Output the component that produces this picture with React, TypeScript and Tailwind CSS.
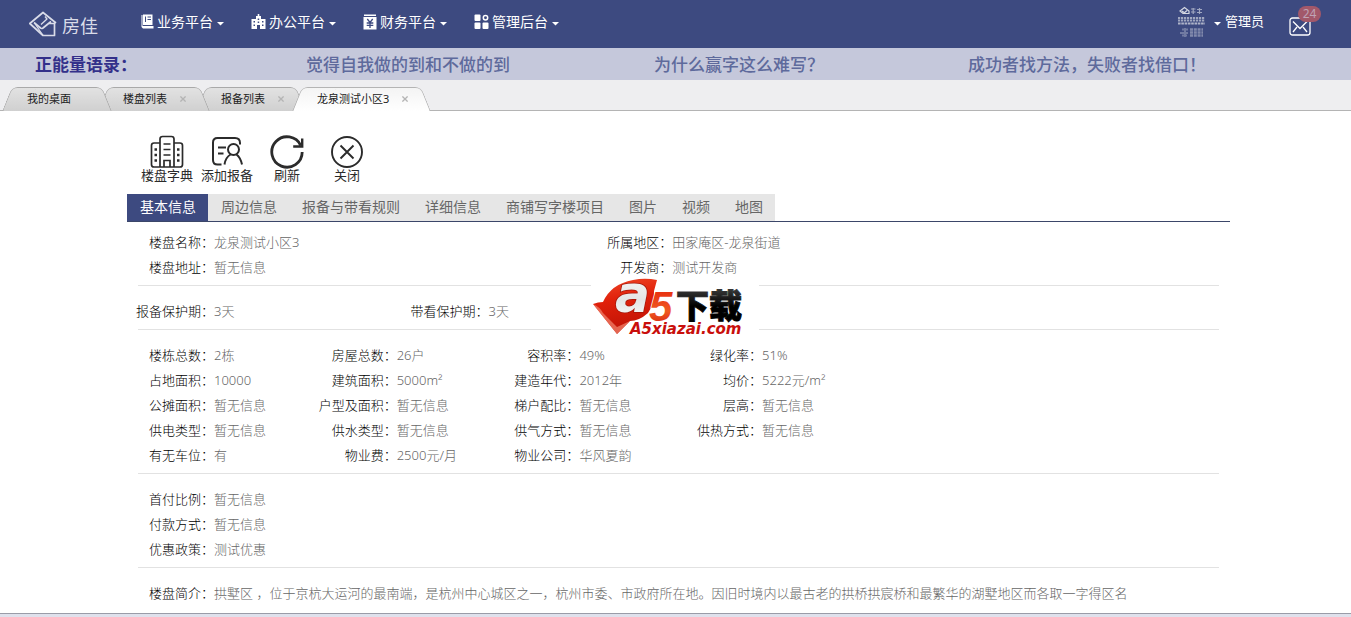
import React from "react";
import clsx from "clsx";

type Field = [label: string, value: string];

const NONE = "暂无信息";

const quotes = ["觉得自我做的到和不做的到", "为什么赢字这么难写？", "成功者找方法，失败者找借口！"];

const infoTabs = ["基本信息", "周边信息", "报备与带看规则", "详细信息", "商铺写字楼项目", "图片", "视频", "地图"];

const location: Field[] = [
  ["楼盘名称", "龙泉测试小区3"],
  ["所属地区", "田家庵区-龙泉街道"],
  ["楼盘地址", NONE],
  ["开发商", "测试开发商"],
];

const protection: Field[] = [
  ["报备保护期", "3天"],
  ["带看保护期", "3天"],
];

const building: Field[] = [
  ["楼栋总数", "2栋"],
  ["房屋总数", "26户"],
  ["容积率", "49%"],
  ["绿化率", "51%"],
  ["占地面积", "10000"],
  ["建筑面积", "5000m²"],
  ["建造年代", "2012年"],
  ["均价", "5222元/m²"],
  ["公摊面积", NONE],
  ["户型及面积", NONE],
  ["梯户配比", NONE],
  ["层高", NONE],
  ["供电类型", NONE],
  ["供水类型", NONE],
  ["供气方式", NONE],
  ["供热方式", NONE],
  ["有无车位", "有"],
  ["物业费", "2500元/月"],
  ["物业公司", "华风夏韵"],
];

const payment: Field[] = [
  ["首付比例", NONE],
  ["付款方式", NONE],
  ["优惠政策", "测试优惠"],
];

const intro: Field[] = [
  [
    "楼盘简介",
    "拱墅区 ，位于京杭大运河的最南端，是杭州中心城区之一，杭州市委、市政府所在地。因旧时境内以最古老的拱桥拱宸桥和最繁华的湖墅地区而各取一字得区名",
  ],
];

function Caret() {
  return (
    <svg width="7" height="4" viewBox="0 0 7 4" fill="currentColor" aria-hidden="true">
      <path d="M0 0h7L3.5 3.6z" />
    </svg>
  );
}

function HouseLogo() {
  return (
    <svg width="28" height="26" viewBox="0 0 28 26" fill="none" stroke="currentColor" strokeWidth="1.7" strokeLinejoin="round" aria-hidden="true">
      <path d="M27 12 14 1.500.800 12.500 14 24.500h11.500V12.500H20" />
      <path d="m5 11.500 6.500 5.500q1 1 2.500 0l8-6.500" />
      <path d="M16 5.500l2 2.500-6 5.500M5.500 12 14 24.500" strokeWidth="1.300" />
    </svg>
  );
}

function BusinessIcon() {
  return (
    <svg width="14" height="16" viewBox="0 0 14 16" fill="currentColor" aria-hidden="true">
      <path fillRule="evenodd" d="M3 .500h9.500V11H3zM5 2.500v5.500h1V2.500zM7.500 2.500v1H11v-1zM7.500 5v1H11V5z" />
      <path d="M1.500 1H2.500v11h11v2.500H3L1.500 13z" />
    </svg>
  );
}

function OfficeIcon() {
  return (
    <svg width="15" height="16" viewBox="0 0 15 16" fill="currentColor" aria-hidden="true">
      <path fillRule="evenodd" d="M6.700 0h1.600v2H10v3h4.500v10H9V11H6v4H.5V5H5V2h1.700zM2.500 7v1.500H4V7zM2.500 10.500V12H4v-1.500zM6.700 4.500V6h1.500V4.500zM6.700 7.500V9h1.500V7.500zM11 7v1.500h1.500V7zM11 10.500V12h1.500v-1.500z" />
    </svg>
  );
}

function FinanceIcon() {
  return (
    <svg width="14" height="16" viewBox="0 0 14 16" aria-hidden="true">
      <path d="M1 .500h12V2H1zM.500 3h13v12.500H.500z" fill="currentColor" />
      <path d="m4.300 5 2.700 3.500L9.700 5M3.700 9h6.600M3.700 11.300h6.600M7 8.500V14" fill="none" stroke="#3d4a80" strokeWidth="1.300" />
    </svg>
  );
}

function AdminIcon() {
  return (
    <svg width="15" height="16" viewBox="0 0 15 16" fill="currentColor" aria-hidden="true">
      <rect x=".500" y=".500" width="6" height="6.500" rx="1" />
      <rect x=".500" y="8.500" width="6" height="6.500" rx="1" />
      <rect x="8.500" y="8.500" width="6" height="6.500" rx="1" />
      <circle cx="11.500" cy="3.700" r="2.200" fill="none" stroke="currentColor" strokeWidth="1.500" />
    </svg>
  );
}

const menus = [
  { label: "业务平台", Icon: BusinessIcon },
  { label: "办公平台", Icon: OfficeIcon },
  { label: "财务平台", Icon: FinanceIcon },
  { label: "管理后台", Icon: AdminIcon },
];

function Avatar() {
  return (
    <svg width="28" height="32" viewBox="0 0 28 32" fill="none" stroke="#d5d8e2" aria-hidden="true">
      <path d="M3 5 7.500 1.500 12 5v2.500H6zM5 5l2.500 1.800L10 4.500" strokeWidth="1.200" />
      <path d="M14 3h4.500M14 6h4.500M16.200 2v6M20 3.500h5M20 6.500h5M22.500 2v6" strokeWidth="1.200" strokeOpacity=".65" />
      <path d="M1 12h27M1 14.500h27" strokeWidth="1.800" strokeDasharray="2.200 .8" strokeOpacity=".65" />
      <path d="M1 17.500h27" strokeWidth="2" strokeDasharray="2.600 .7" strokeOpacity=".75" />
      <path d="M5 23.500h6M3 27h8M5 29.500h5M8 22v9" strokeWidth="2" strokeOpacity=".35" />
      <path d="M13 23.500h13M13 26.500h13M13 29.500h13" strokeWidth="2.400" strokeDasharray="3 .8" strokeOpacity=".45" />
    </svg>
  );
}

function MailIcon() {
  return (
    <svg width="22" height="19" viewBox="0 0 22 19" fill="none" stroke="white" strokeWidth="1.300" aria-hidden="true">
      <rect x="1" y="1" width="20" height="17" rx="2.500" />
      <path d="m4 4.500 7 7 7-7M4 15l4-5M18 15l-4-5" />
    </svg>
  );
}

function BuildingsIcon() {
  return (
    <svg width="34" height="34" viewBox="0 0 34 34" fill="none" stroke="currentColor" strokeWidth="1.700" aria-hidden="true">
      <path d="M10 32V4q0-2.500 2.500-2.500h9Q24 1.500 24 4v28" />
      <path d="M10 8H4Q1.500 8 1.500 10.500v19Q1.500 32 4 32h26q2.500 0 2.500-2.500v-19Q32.500 8 30 8h-6" />
      <path d="M13.500 9h7M13.500 14.500h7M13.500 20h7M14 32v-6.500h6V32" />
      <path d="M4.500 14.500H7M4.500 20H7M4.500 25.500H7M27 14.500h2.500M27 20h2.500M27 25.500h2.500" strokeWidth="2.400" />
    </svg>
  );
}

function AddReportIcon() {
  return (
    <svg width="34" height="34" viewBox="0 0 34 34" fill="none" stroke="currentColor" strokeWidth="2" aria-hidden="true">
      <path d="M11.500 29.500H7.500Q3 29.500 3 25V7.500Q3 3 7.500 3H25q5 0 5 5v1.500" />
      <path d="M8 12.500h8M8 18.500h5.500" />
      <circle cx="23.500" cy="14.500" r="5.500" />
      <path d="M14.500 29.500q1-7 6-10M26.500 19.500q4 3 5.500 10" />
    </svg>
  );
}

function RefreshIcon() {
  return (
    <svg width="34" height="34" viewBox="0 0 34 34" fill="none" stroke="currentColor" strokeWidth="2.800" aria-hidden="true">
      <path d="M32.200 17A15.200 15.200 0 1 1 30.800 10.600" />
      <path d="M32.200 3.500v8h-9" strokeWidth="2.400" />
    </svg>
  );
}

function CloseIcon() {
  return (
    <svg width="34" height="34" viewBox="0 0 34 34" fill="none" stroke="currentColor" strokeWidth="1.900" aria-hidden="true">
      <circle cx="17" cy="17" r="15" />
      <path d="m10.500 10.500 13 13M23.500 10.500l-13 13" />
    </svg>
  );
}

const tools = [
  { label: "楼盘字典", Icon: BuildingsIcon },
  { label: "添加报备", Icon: AddReportIcon },
  { label: "刷新", Icon: RefreshIcon },
  { label: "关闭", Icon: CloseIcon },
];

function Watermark() {
  return (
    <svg width="168" height="63" viewBox="0 0 168 63" className="overflow-visible bg-white" role="img" aria-label="A5下载 A5xiazai.com">
      <defs>
        <linearGradient id="wm-red" x1="0.200" y1="0" x2="0.400" y2="1">
          <stop offset="0" stopColor="#ee4526" />
          <stop offset="0.400" stopColor="#e0200a" />
          <stop offset="1" stopColor="#bd1206" />
        </linearGradient>
        <linearGradient id="wm-ink" x1="0" y1="0" x2="0" y2="1">
          <stop offset="0" stopColor="#555" />
          <stop offset="0.550" stopColor="#000" />
        </linearGradient>
        <linearGradient id="wm-a" x1="0" y1="0" x2="0" y2="1">
          <stop offset="0" stopColor="#fff" />
          <stop offset="0.600" stopColor="#e4e4e4" />
          <stop offset="1" stopColor="#fff" />
        </linearGradient>
        <linearGradient id="wm-five" x1="0" y1="0" x2="0" y2="1">
          <stop offset="0" stopColor="#e52009" />
          <stop offset="0.600" stopColor="#f05a22" />
          <stop offset="1" stopColor="#cf1408" />
        </linearGradient>
      </defs>
      <path d="M2 26q5-2 10-2Q20 6 42 2q12-2.500 24 0l-3 11q1 12-6 22-9 8-18 8L26 56z" fill="url(#wm-red)" />
      <path d="M2 26q7 3 10 9l14 14 13-6-13 13z" fill="#f0806a" fillOpacity=".75" />
      <text x="24" y="34" fontSize="52" fontWeight="700" fontStyle="italic" fontFamily="DejaVu Sans, sans-serif" fill="url(#wm-a)" stroke="#a3160a" strokeWidth="1.500" paintOrder="stroke">a</text>
      <text x="58" y="43" fontSize="42" fontWeight="700" fontStyle="italic" fontFamily="Liberation Sans, sans-serif" fill="url(#wm-five)" stroke="#fff" strokeWidth="1.500" paintOrder="stroke">5</text>
      <text x="85" y="40" fontSize="33" fontWeight="900" fontFamily="Noto Sans CJK SC, sans-serif" fill="url(#wm-ink)" stroke="url(#wm-ink)" strokeWidth="1">下载</text>
      <text x="39" y="56" fontSize="15" fontWeight="700" fontStyle="italic" fontFamily="DejaVu Sans, sans-serif" fill="#c90f0c">A5xiazai.com</text>
    </svg>
  );
}

type PageTabProps = { label: string; className: string; active?: boolean; closable?: boolean };

function PageTab({ label, className, active, closable }: PageTabProps) {
  const face = active ? "from-[#f4f4f4] to-white border-[#b4b4b4]" : "from-[#e2e2e2] to-[#d0d0d0] border-[#a9a9a9]";
  return (
    <li className={clsx("relative flex h-6 shrink-0 items-center", className)}>
      <span aria-hidden="true" className={clsx("absolute inset-y-0 left-1 right-1/2 origin-center -skew-x-[22deg] rounded-tl-md border-l border-t bg-linear-to-b", face)} />
      <span aria-hidden="true" className={clsx("absolute inset-y-0 left-1/3 right-1 origin-center skew-x-[22deg] rounded-tr-md border-r border-t bg-linear-to-b", face)} />
      <a href="#" className="relative pl-6 text-[#222]">{label}</a>
      {closable && (
        <button type="button" aria-label={`关闭${label}`} className="relative ml-[13px] text-[#b4b4b4]">
          <svg width="6" height="6" viewBox="0 0 7 7" stroke="currentColor" strokeWidth="1.500" aria-hidden="true">
            <path d="m.5.5 6 6M6.500.5l-6 6" />
          </svg>
        </button>
      )}
    </li>
  );
}

function Fields({ items, itemClass }: { items: Field[]; itemClass: string }) {
  return (
    <dl className="flex flex-wrap pb-[5px] pt-[13px]">
      {items.map(([label, value]) => (
        <div key={label} className={clsx("flex leading-[25px]", itemClass)}>
          <dt className="flex w-[76px] shrink-0 justify-end whitespace-nowrap text-black">{label}：</dt>
          <dd className="text-[#666]">{value}</dd>
        </div>
      ))}
    </dl>
  );
}

export default function App() {
  return (
    <div className="flex min-h-screen flex-col bg-white font-['Noto_Sans','Noto_Sans_CJK_SC',sans-serif] text-[13px]">
      <header className="flex h-12 items-center bg-[#3d4a80] pl-[29px] pr-10 text-white">
        <a href="#" className="flex items-center gap-[5px] text-lg leading-6 text-[#d9dce8]">
          <HouseLogo />
          <span className="pt-1">房佳</span>
        </a>
        <nav className="ml-[42px] flex gap-[27px] pb-1">
          {menus.map(({ label, Icon }) => (
            <button key={label} type="button" className="flex items-center gap-[3px] text-sm">
              <Icon />
              <span>{label}</span>
              <span className="pl-px pt-1"><Caret /></span>
            </button>
          ))}
        </nav>
        <button type="button" className="ml-auto flex items-center pb-1 text-[13px]">
          <Avatar />
          <span className="ml-[9px] pt-1"><Caret /></span>
          <span className="ml-1">管理员</span>
        </button>
        <button type="button" aria-label="消息 24" className="relative ml-[25px] mt-1">
          <MailIcon />
          <span className="absolute -top-[11px] left-[9px] flex h-4 w-[23px] items-center justify-center rounded-full bg-[#a2586a] text-xs text-[#bfa3b5]">24</span>
        </button>
      </header>

      <section className="flex h-8 items-center gap-[169px] overflow-hidden whitespace-nowrap bg-[#c5c8db] pl-[35px] pt-[2px] text-[17px]">
        <h2 className="font-bold text-[#33308a]">正能量语录：</h2>
        <ul className="flex gap-36 font-medium text-[#5e6a9c]">
          {quotes.map((quote) => (
            <li key={quote}>{quote}</li>
          ))}
        </ul>
      </section>

      <nav className="border-b border-[#b4b4b4] bg-[#eeeef0] pt-[7px]">
        <ul className="-mb-px flex h-6 pl-[3px] text-[11px]">
          <PageTab label="我的桌面" className="z-30 w-[108px]" />
          <PageTab label="楼盘列表" className="z-20 -ml-3 w-[110px]" closable />
          <PageTab label="报备列表" className="z-10 -ml-3 w-[108px]" closable />
          <PageTab label="龙泉测试小区3" className="z-40 -ml-3 w-[137px]" active closable />
        </ul>
      </nav>

      <main className="flex-1 pb-px pl-[127px] pr-[121px] pt-6">
        <div className="flex pl-[10px]">
          {tools.map(({ label, Icon }) => (
            <button key={label} type="button" className="flex w-[60px] flex-col items-center whitespace-nowrap leading-4 text-[#2b2b2b]">
              <Icon />
              <span className="-mt-[2px] pb-px">{label}</span>
            </button>
          ))}
        </div>

        <div role="tablist" className="mt-[10px] flex border-b border-[#3b4669] text-sm leading-[25px]">
          {infoTabs.map((tab, i) => (
            <button
              key={tab}
              type="button"
              role="tab"
              aria-selected={i === 0}
              className={clsx("whitespace-nowrap pb-[2px] pl-[13px] pr-3", i === 0 ? "bg-[#3d4a80] text-white" : "bg-[#e6e6e6] text-[#666]")}
            >
              {tab}
            </button>
          ))}
        </div>

        <div className="relative px-[11px]">
          <div className="-mt-[5px] divide-y divide-[#e2e2e2] font-light">
            <Fields items={location} itemClass="w-[42.4%] even:w-[57.6%]" />
            <Fields items={protection} itemClass="w-[25.4%]" />
            <Fields items={building} itemClass="w-[16.9%] [&:nth-child(4n)]:w-[49.3%]" />
            <Fields items={payment} itemClass="w-full" />
            <Fields items={intro} itemClass="w-full" />
          </div>
          <div className="pointer-events-none absolute left-[464px] top-[61px]">
            <Watermark />
          </div>
        </div>
      </main>
      <footer className="h-1 border-t border-[#9a9ca8] bg-[#dfe1ec]" />
    </div>
  );
}
